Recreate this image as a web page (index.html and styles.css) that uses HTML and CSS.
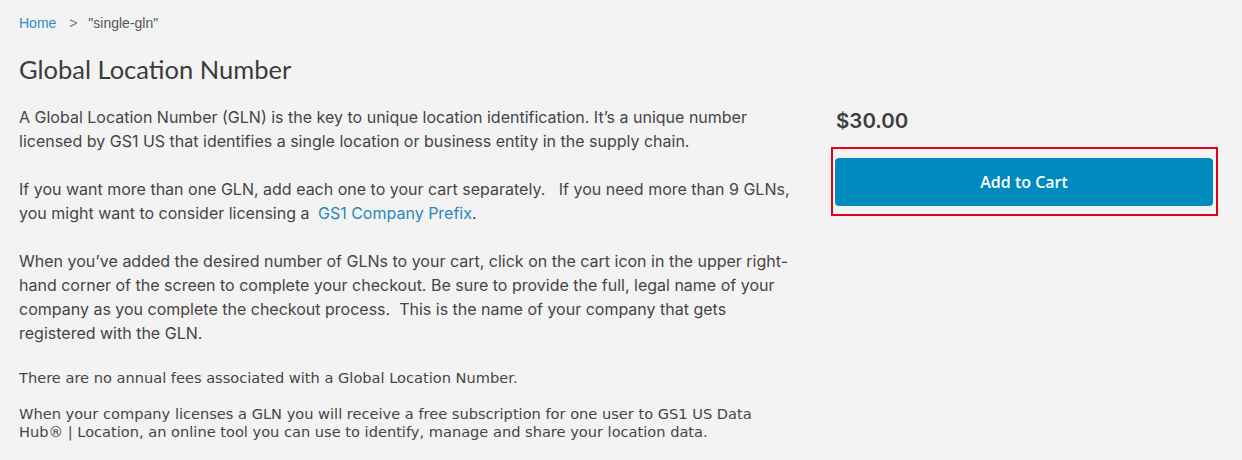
FILE: index.html
```html
<!DOCTYPE html>
<html lang="en">
<head>
    <meta charset="UTF-8">
    <meta name="viewport" content="width=device-width, initial-scale=1.0">
    <title>Global Location Number</title>
    <link rel="stylesheet" href="styles.css">
</head>
<body>
    <div class="page">
        <nav class="breadcrumb">
            <a href="#">Home</a>
            <span class="sep">&gt;</span>
            <span>"single-gln"</span>
        </nav>

        <h1>Global Location Number</h1>

        <div class="product">
            <div class="description">
                <p>A Global Location Number (GLN) is the key to unique location identification. It’s a unique number licensed by GS1 US that identifies a single location or business entity in the supply chain.</p>
                <p>If you want more than one GLN, add each one to your cart separately.&nbsp;&nbsp; If you need more than 9 GLNs, you might want to consider licensing a <a href="#" class="prefix-link">GS1 Company Prefix</a>.</p>
                <p>When you’ve added the desired number of GLNs to your cart, click on the cart icon in the upper right-hand corner of the screen to complete your checkout. Be sure to provide the full, legal name of your company as you complete the checkout process.&nbsp; This is the name of your company that gets registered with the GLN.</p>
                <p class="small">There are no annual fees associated with a Global Location Number.</p>
                <p class="small">When your company licenses a GLN you will receive a free subscription for one user to GS1 US Data Hub® | Location, an online tool you can use to identify, manage and share your location data.</p>
            </div>

            <div class="buy-box">
                <div class="price">$30.00</div>
                <div class="highlight">
                    <button type="button" class="add-cart">Add to Cart</button>
                </div>
            </div>
        </div>
    </div>
</body>
</html>
```

FILE: styles.css
```css
body {
    margin: 0;
    padding: 0;
    background-color: #f3f3f3;
    color: #454545;
    font-family: Inter, "Noto Sans", sans-serif;
}
.page {
    padding: 0 19px;
}
.breadcrumb {
    padding-top: 15px;
    font-family: "Liberation Sans", Arial, sans-serif;
    font-size: 14px;
    color: #555;
}
.breadcrumb a {
    color: #2d8dc4;
    text-decoration: none;
}
.breadcrumb .sep {
    margin: 0 7px 0 9px;
    color: #777;
}
h1 {
    margin: 23px 0 21px;
    font-family: Lato, "Open Sans", sans-serif;
    font-weight: 400;
    font-size: 25.5px;
    color: #3b3b3b;
}
.product {
    display: flex;
    gap: 32px;
}
.description {
    width: 780px;
    font-size: 16px;
    line-height: 24px;
}
.description p {
    margin: 0 0 24px;
}
.description a {
    color: #2a88bb;
    text-decoration: none;
}
.description .prefix-link {
    margin-left: 4px;
}
.description p.small {
    font-family: "DejaVu Sans", Verdana, sans-serif;
    font-size: 14.6px;
    line-height: 18px;
    margin: 0 0 18px;
}
.buy-box {
    width: 387px;
    padding-top: 3px;
}
.price {
    margin-left: 5px;
    font-size: 20.5px;
    font-weight: 600;
    color: #3e3e3e;
}
.highlight {
    margin-top: 14px;
    border: 2px solid #e2001a;
    padding: 9px 3px 8px 2px;
}
.add-cart {
    display: block;
    width: 100%;
    height: 48px;
    border: none;
    border-radius: 4px;
    background-color: #008bbf;
    color: #fff;
    font-family: "Open Sans", sans-serif;
    font-size: 16px;
    font-weight: 600;
    cursor: pointer;
}
```
